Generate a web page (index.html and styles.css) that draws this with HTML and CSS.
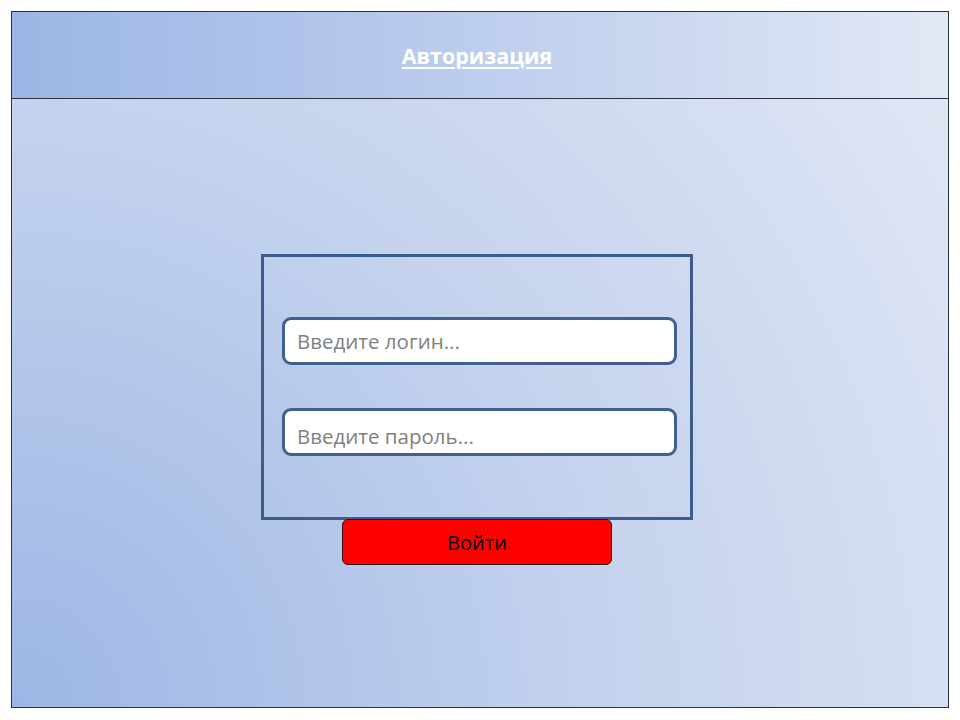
FILE: index.html
```html
<!DOCTYPE html>
<html lang="ru">
<head>
<meta charset="utf-8">
<title>Авторизация</title>
<link rel="stylesheet" href="styles.css">
</head>
<body>
<div class="frame">
  <header class="header">
    <span class="title">Авторизация</span>
  </header>
  <main class="main">
    <div class="form-box">
      <div class="field field-login"><span class="placeholder">Введите логин...</span></div>
      <div class="field field-pass"><span class="placeholder">Введите пароль...</span></div>
    </div>
    <div class="btn">Войти</div>
  </main>
</div>
</body>
</html>
```
FILE: styles.css
```css
html, body {
  margin: 0;
  padding: 0;
  background: #ffffff;
}
body {
  font-family: "Open Sans", "Noto Sans", sans-serif;
}
.frame {
  margin: 11px 0 0 11px;
  width: 938px;
  height: 697px;
  box-sizing: border-box;
  border: 1px solid #2c3040;
  display: flex;
  flex-direction: column;
}
.header {
  height: 87px;
  flex: 0 0 auto;
  box-sizing: border-box;
  border-bottom: 1px solid #2c3040;
  background: linear-gradient(90deg, #9cb6e5 0%, #b6c8ec 40%, #e2e8f5 100%);
  display: flex;
  align-items: center;
  justify-content: center;
  padding-right: 6px;
}
.title {
  color: #ffffff;
  font-weight: 700;
  font-size: 21.5px;
  text-decoration: underline;
  text-underline-offset: 3px;
  text-decoration-thickness: 2px;
}
.main {
  flex: 1;
  background: radial-gradient(circle at bottom left, #9db6e5 0px, #c5d3ee 608px, #d6dff2 936px, #e0e6f4 1116px);
  display: flex;
  flex-direction: column;
  align-items: center;
  padding-top: 155px;
  padding-right: 6px;
}
.form-box {
  width: 432px;
  height: 266px;
  box-sizing: border-box;
  border: 3px solid #3c5c8c;
  padding: 60px 0 0 18px;
  display: flex;
  flex-direction: column;
  gap: 43px;
}
.field {
  width: 395px;
  height: 48px;
  box-sizing: border-box;
  border: 3px solid #41608f;
  border-radius: 9px;
  background: #ffffff;
  display: flex;
  align-items: center;
  padding-left: 12px;
}
.field-pass {
  padding-top: 8px;
}
.placeholder {
  color: #7f7f7f;
  font-size: 20.5px;
}
.btn {
  margin-top: -1px;
  width: 270px;
  height: 46px;
  box-sizing: border-box;
  border: 1px solid #3a1010;
  border-radius: 6px;
  background: #ff0000;
  color: #000000;
  font-size: 20px;
  display: flex;
  align-items: center;
  justify-content: center;
}
```
